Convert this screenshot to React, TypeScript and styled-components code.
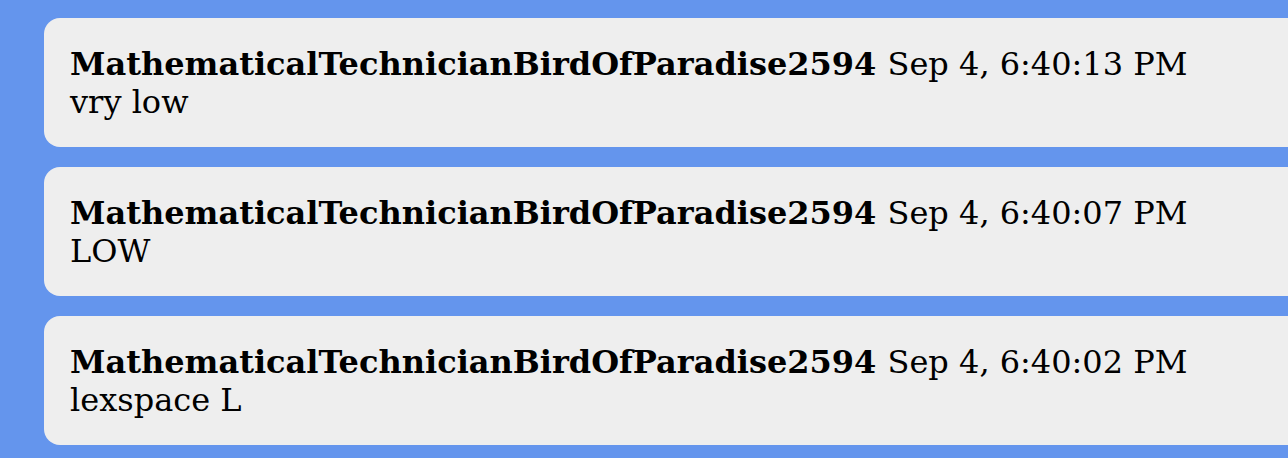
import React from "react";
import styled, { createGlobalStyle } from "styled-components";

const GlobalStyle = createGlobalStyle`
  html, body {
    margin: 0;
    padding: 0;
    overflow: hidden;
    background: #6495ed;
  }
`;

const Feed = styled.div`
  display: flex;
  flex-direction: column;
  gap: 20px;
  padding: 18px 0 0 44px;
  width: 1400px;
  font-family: "DejaVu Serif", serif;
  font-size: 32px;
  color: #000;
`;

const Card = styled.div`
  background: #eeeeee;
  border-radius: 16px;
  padding: 27px 26px;
  height: 129px;
  box-sizing: border-box;
`;

const Header = styled.div`
  white-space: nowrap;
`;

const Author = styled.strong`
  font-weight: bold;
`;

const Body = styled.div``;

const messages = [
  { author: "MathematicalTechnicianBirdOfParadise2594", time: "Sep 4, 6:40:13 PM", text: "vry low" },
  { author: "MathematicalTechnicianBirdOfParadise2594", time: "Sep 4, 6:40:07 PM", text: "LOW" },
  { author: "MathematicalTechnicianBirdOfParadise2594", time: "Sep 4, 6:40:02 PM", text: "lexspace L" },
];

export default function App() {
  return (
    <>
      <GlobalStyle />
      <Feed>
        {messages.map((m, i) => (
          <Card key={i}>
            <Header>
              <Author>{m.author} </Author>
              {m.time}
            </Header>
            <Body>{m.text}</Body>
          </Card>
        ))}
      </Feed>
    </>
  );
}
